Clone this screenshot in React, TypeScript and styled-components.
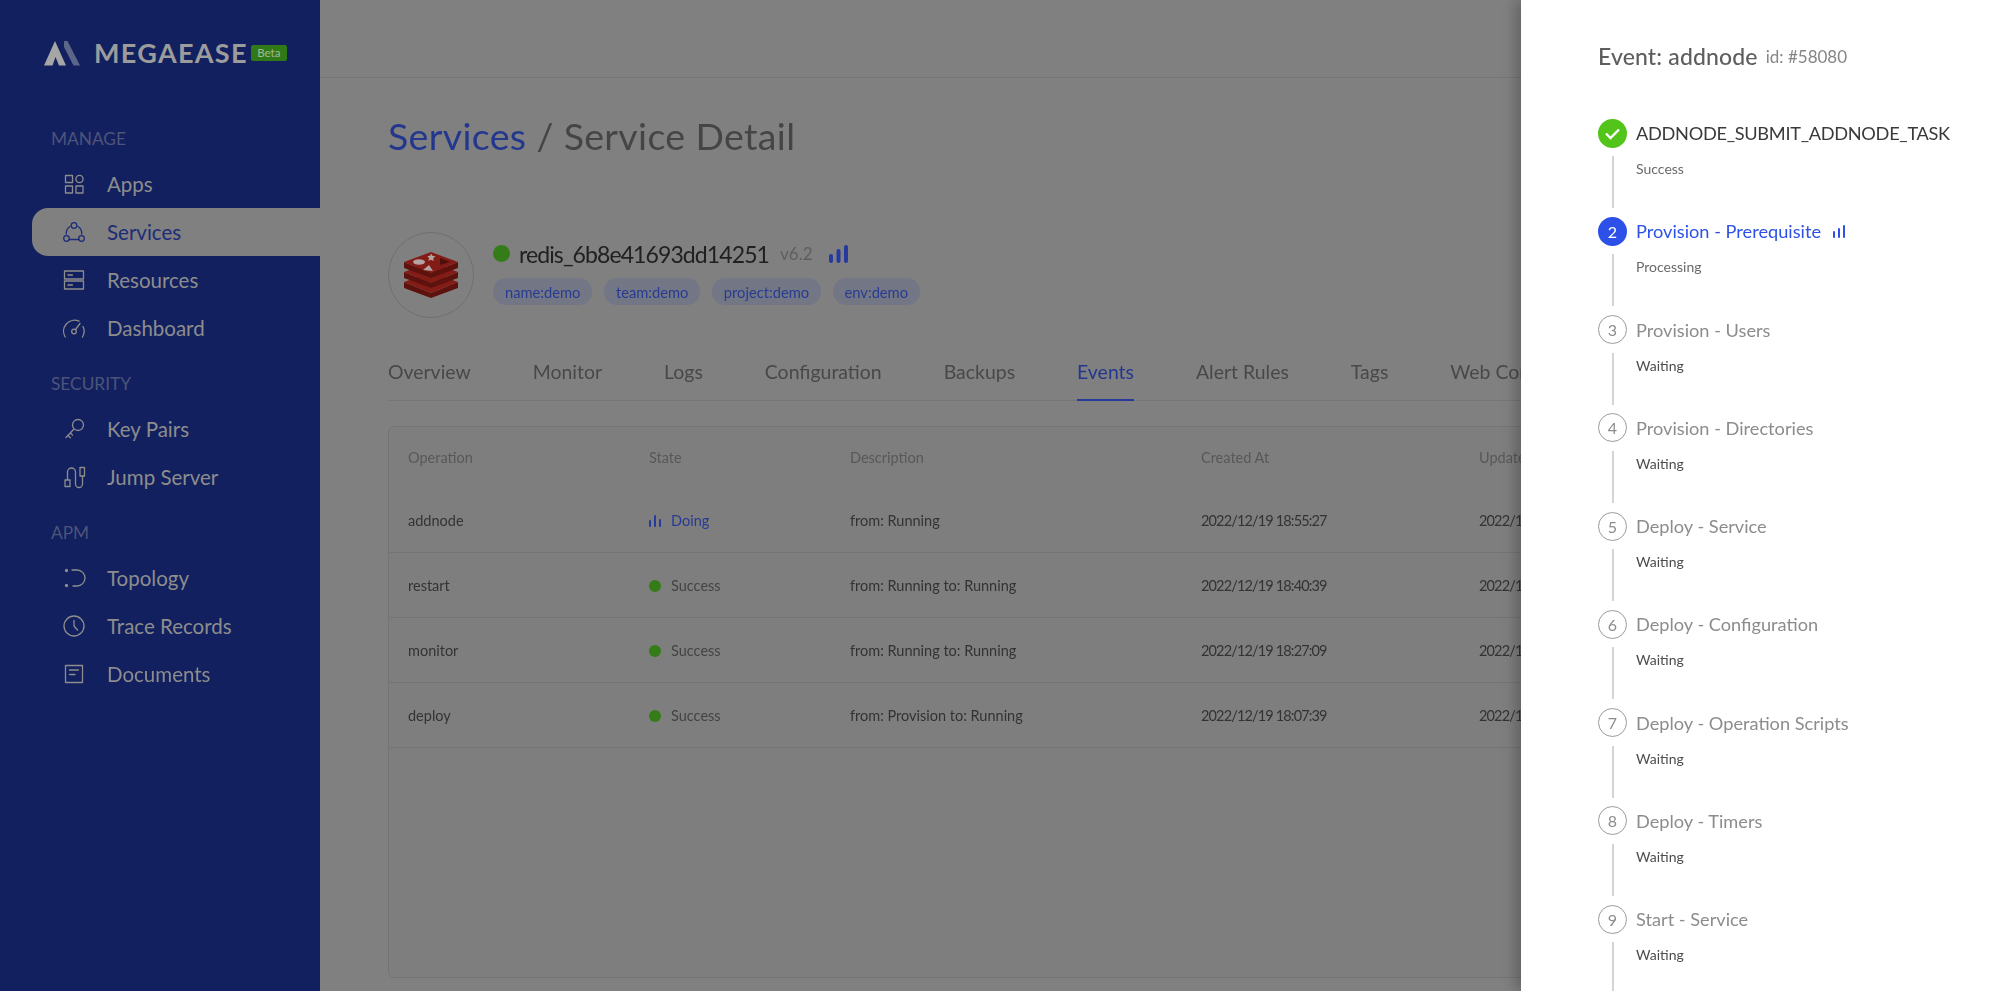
import React from "react";
import styled, { createGlobalStyle } from "styled-components";

const GlobalStyle = createGlobalStyle`
  html, body {
    margin: 0;
    padding: 0;
    height: 100%;
    overflow: hidden;
    background: #808080;
  }
  * {
    box-sizing: border-box;
  }
`;

const Page = styled.div`
  position: relative;
  width: 1999px;
  height: 991px;
  display: flex;
  overflow: hidden;
  font-family: "Lato", "Noto Sans", sans-serif;
  filter: blur(0.4px);
`;

const Sidebar = styled.aside`
  width: 320px;
  flex: none;
  background: #12205f;
  color: #8d8d8d;
`;

const LogoRow = styled.div`
  height: 124px;
  padding: 40px 0 0 44px;
  display: flex;
  align-items: flex-start;
`;

const LogoText = styled.span`
  margin-left: 14px;
  font-size: 27px;
  line-height: 26px;
  font-weight: 700;
  letter-spacing: 1.3px;
  color: #9c9c9c;
`;

const BetaBadge = styled.span`
  margin: 5px 0 0 3px;
  width: 36px;
  height: 16px;
  border-radius: 2px;
  background: #2f7a16;
  color: #a4b79c;
  font-size: 11.5px;
  line-height: 16px;
  text-align: center;
`;

const SectionLabel = styled.div<{ $first?: boolean }>`
  height: 36px;
  margin-top: ${(p) => (p.$first ? 0 : 17)}px;
  padding: 5px 0 0 51px;
  font-size: 17.3px;
  line-height: 20px;
  color: #4d5479;
`;

const NavItem = styled.div<{ $active?: boolean }>`
  height: 48px;
  margin-left: 32px;
  padding-left: 30px;
  display: flex;
  align-items: center;
  gap: 21px;
  font-size: 20.5px;
  border-radius: 16px 0 0 16px;
  background: ${(p) => (p.$active ? "#808080" : "transparent")};
  color: ${(p) => (p.$active ? "#1c2c78" : "#8d8d8d")};
  svg {
    flex: none;
    width: 24px;
    height: 24px;
  }
`;

const Main = styled.main`
  flex: 1;
  min-width: 0;
  overflow: hidden;
`;

const TopBar = styled.div`
  height: 78px;
  border-bottom: 1px solid #757575;
`;

const Content = styled.div`
  padding: 0 64px 0 68px;
`;

const Crumbs = styled.h1`
  margin: 35px 0 0;
  font-size: 37.5px;
  line-height: 46px;
  font-weight: 400;
  letter-spacing: 0.35px;
  color: #454545;
`;

const CrumbLink = styled.span`
  color: #24378f;
`;

const ServiceHead = styled.div`
  margin-top: 73px;
  height: 86px;
  display: flex;
  gap: 19px;
`;

const Avatar = styled.div`
  width: 86px;
  height: 86px;
  flex: none;
  border-radius: 50%;
  border: 1px solid #6f6f6f;
  display: flex;
  align-items: center;
  justify-content: center;
`;

const ServiceInfo = styled.div`
  display: flex;
  flex-direction: column;
`;

const NameRow = styled.div`
  height: 46px;
  padding-bottom: 3px;
  display: flex;
  align-items: center;
`;

const StatusDot = styled.span<{ $size: number }>`
  width: ${(p) => p.$size}px;
  height: ${(p) => p.$size}px;
  flex: none;
  border-radius: 50%;
  background: #337c17;
`;

const ServiceName = styled.span`
  margin-left: 9px;
  font-size: 23px;
  letter-spacing: -0.9px;
  color: #202020;
`;

const Version = styled.span`
  margin-left: 11px;
  font-size: 17px;
  color: #5e5e5e;
`;

const NameBars = styled.span`
  margin-left: 16px;
  display: flex;
`;

const TagRow = styled.div`
  display: flex;
  gap: 11.5px;
`;

const Tag = styled.span`
  height: 27px;
  padding: 0 12px;
  display: flex;
  align-items: center;
  border-radius: 13px;
  background: #737785;
  color: #283b92;
  font-size: 14.7px;
`;

const Tabs = styled.div`
  margin-top: 27px;
  height: 56px;
  display: flex;
  gap: 62px;
  border-bottom: 1px solid #767676;
  white-space: nowrap;
`;

const Tab = styled.div<{ $active?: boolean }>`
  height: 56px;
  padding-bottom: 2px;
  display: flex;
  align-items: center;
  font-size: 19.45px;
  color: ${(p) => (p.$active ? "#24378f" : "#484848")};
  border-bottom: 2px solid ${(p) => (p.$active ? "#273a9a" : "transparent")};
`;

const TableBox = styled.div`
  margin-top: 25px;
  height: 552px;
  border: 1px solid #747474;
  border-radius: 6px;
  background: #7e7e7e;
`;

const Row = styled.div<{ $head?: boolean }>`
  height: ${(p) => (p.$head ? 61 : 65)}px;
  padding: ${(p) => (p.$head ? "0" : "1px")} 0 0 19px;
  display: grid;
  grid-template-columns: 241px 201px 351px 278px 1fr;
  align-items: center;
  font-size: 14.5px;
  color: ${(p) => (p.$head ? "#585858" : "#333")};
  border-bottom: ${(p) => (p.$head ? "none" : "1px solid #747474")};
  white-space: nowrap;
`;

const DateCell = styled.div`
  letter-spacing: -0.85px;
`;

const StateCell = styled.div<{ $doing?: boolean }>`
  display: flex;
  align-items: center;
  gap: 10px;
  color: ${(p) => (p.$doing ? "#273a96" : "#444")};
`;

const StateMark = styled.span`
  width: 12px;
  display: flex;
  justify-content: center;
`;

const Drawer = styled.aside`
  position: absolute;
  top: 0;
  right: 0;
  bottom: 0;
  width: 478px;
  padding: 41px 0 0 77px;
  background: #fff;
  box-shadow: -6px 0 12px rgba(0, 0, 0, 0.22);
  overflow: hidden;
`;

const DrawerTitle = styled.div`
  height: 30px;
  display: flex;
  align-items: center;
  gap: 8px;
  font-size: 23px;
  font-weight: 500;
  letter-spacing: 0.15px;
  color: #5e5e5e;
`;

const EventId = styled.span`
  font-size: 17px;
  font-weight: 400;
  letter-spacing: 0;
  color: #858585;
`;

const Steps = styled.div`
  margin-top: 47.5px;
`;

const Step = styled.div`
  height: 98.25px;
  display: flex;
  gap: 9px;
`;

const StepRail = styled.div`
  width: 29px;
  flex: none;
  display: flex;
  flex-direction: column;
  align-items: center;
`;

const StepIcon = styled.div<{ $state: string }>`
  width: 29px;
  height: 29px;
  flex: none;
  border-radius: 50%;
  display: flex;
  align-items: center;
  justify-content: center;
  font-size: 16px;
  border: 1px solid ${(p) => (p.$state === "wait" ? "#9a9a9a" : "transparent")};
  background: ${(p) => (p.$state === "done" ? "#52c41a" : p.$state === "active" ? "#2d51e8" : "#fff")};
  color: ${(p) => (p.$state === "wait" ? "#8c8c8c" : "#fff")};
`;

const StepLine = styled.div`
  width: 2px;
  height: 52px;
  margin-top: 8.5px;
  background: #d4d4d4;
`;

const StepTitle = styled.div<{ $state: string }>`
  height: 29px;
  display: flex;
  align-items: center;
  gap: 12px;
  font-size: 18.2px;
  letter-spacing: ${(p) => (p.$state === "done" ? "-0.3px" : "0")};
  color: ${(p) => (p.$state === "done" ? "#3a3a3a" : p.$state === "active" ? "#2d51e8" : "#8c8c8c")};
`;

const StepDesc = styled.div<{ $state: string }>`
  margin-top: 11.5px;
  line-height: 20px;
  font-size: 14px;
  color: ${(p) => (p.$state === "wait" ? "#4c4c4c" : "#6a6a6a")};
`;

type IconProps = { d: string; extra?: React.ReactNode };

const LineIcon = ({ d, extra }: IconProps) => (
  <svg viewBox="0 0 24 24" fill="none" stroke="currentColor" strokeWidth="1.3" strokeLinecap="round" strokeLinejoin="round">
    <path d={d} />
    {extra}
  </svg>
);

const icons: Record<string, React.ReactNode> = {
  Apps: (
    <LineIcon
      d="M3.5 3.5h7v7h-7zM3.5 14h7v7h-7zM14 14h7v7h-7z"
      extra={<circle cx="17.5" cy="7" r="3.6" />}
    />
  ),
  Services: (
    <LineIcon
      d="M8 6.5A8.3 8.3 0 0 0 4.3 14M16 6.5A8.3 8.3 0 0 1 19.7 14M7 19.5h10"
      extra={
        <>
          <circle cx="12" cy="5.5" r="2.8" />
          <circle cx="4.5" cy="18.5" r="2.8" />
          <circle cx="19.5" cy="18.5" r="2.8" />
        </>
      }
    />
  ),
  Resources: <LineIcon d="M2.5 3h19v8h-19zM2.5 13h19v8h-19zM6 7h4.5M6 17h4.5" />,
  Dashboard: (
    <LineIcon
      d="M3.2 21A11 11 0 0 1 17 5.2M21 10.5a11 11 0 0 1-.5 10.5M13.5 13.5 18 7.5"
      extra={<circle cx="12" cy="15.5" r="2.3" />}
    />
  ),
  "Key Pairs": (
    <LineIcon
      d="M11.5 12.5 4 20.5M6 18.5l2.5 2.3M8.5 16l2 2"
      extra={<circle cx="16" cy="8" r="5.5" />}
    />
  ),
  "Jump Server": (
    <LineIcon d="M5.5 14V7a4 4 0 0 1 8 0v12a3.5 3.5 0 0 0 7 0v-7M3 15h5v6.5H3zM18 2.5h4.5V11H18z" />
  ),
  Topology: (
    <LineIcon
      d="M10 4h5a8 8 0 0 1 0 16h-4"
      extra={
        <>
          <circle cx="4.5" cy="4.5" r="1" fill="currentColor" />
          <circle cx="4.5" cy="19.5" r="1" fill="currentColor" />
        </>
      }
    />
  ),
  "Trace Records": <LineIcon d="M12 6.5V12l3.5 4" extra={<circle cx="12" cy="12" r="10" />} />,
  Documents: <LineIcon d="M3.5 3.5h17v17h-17zM7.5 8h9M7.5 12.5h5.5" />,
};

const Nav = ({ name, active }: { name: string; active?: boolean }) => (
  <NavItem $active={active}>
    {icons[name]}
    {name}
  </NavItem>
);

const Logo = () => (
  <svg width="36" height="26" viewBox="0 0 36 26">
    <path d="M11 1 22 25.5H15L11.5 17 8.5 25.5H0Z" fill="#a6a6a6" />
    <path d="M20 1h3.5L36 25.5h-6.5L20 7Z" fill="#5c6687" />
  </svg>
);

const RedisLayer = ({ y }: { y: number }) => (
  <g transform={`translate(0 ${y})`}>
    <path d="M0 10v6l27 10 27-10v-6L27 21Z" fill="#5e120e" />
    <path d="M0 10 27 0l27 10-27 11Z" fill="#831c17" />
  </g>
);

const RedisLogo = () => (
  <svg width="54" height="46" viewBox="0 0 54 46">
    <RedisLayer y={20} />
    <RedisLayer y={10} />
    <RedisLayer y={0} />
    <ellipse cx="15" cy="10" rx="6" ry="2.8" fill="#b3a3a1" />
    <path d="m27 1.5 1.300 2.300 3.200.5-2.300 1.900.5 2.800-2.700-1.300-2.800 1 1-2.700-2-1.800 2.900-.5Z" fill="#b3a3a1" />
    <path d="m19 18 6-5 4 6Z" fill="#b3a3a1" />
    <path d="m36 6 10 4-10 3Z" fill="#4d0f0a" />
  </svg>
);

const BarsIcon = ({ w, h, color, bars, bw }: { w: number; h: number; color: string; bars: number[]; bw: number }) => (
  <svg width={w} height={h} viewBox={`0 0 ${w} ${h}`}>
    {bars.map((b, i) => (
      <rect
        key={i}
        x={(i * (w - bw)) / (bars.length - 1)}
        y={h - b}
        width={bw}
        height={b}
        rx={bw / 2}
        fill={color}
      />
    ))}
  </svg>
);

const events = [
  { op: "addnode", doing: true, state: "Doing", desc: "from: Running", at: "2022/12/19 18:55:27" },
  { op: "restart", state: "Success", desc: "from: Running to: Running", at: "2022/12/19 18:40:39" },
  { op: "monitor", state: "Success", desc: "from: Running to: Running", at: "2022/12/19 18:27:09" },
  { op: "deploy", state: "Success", desc: "from: Provision to: Running", at: "2022/12/19 18:07:39" },
];

const steps = [
  { title: "ADDNODE_SUBMIT_ADDNODE_TASK", desc: "Success", state: "done" },
  { title: "Provision - Prerequisite", desc: "Processing", state: "active" },
  { title: "Provision - Users", desc: "Waiting", state: "wait" },
  { title: "Provision - Directories", desc: "Waiting", state: "wait" },
  { title: "Deploy - Service", desc: "Waiting", state: "wait" },
  { title: "Deploy - Configuration", desc: "Waiting", state: "wait" },
  { title: "Deploy - Operation Scripts", desc: "Waiting", state: "wait" },
  { title: "Deploy - Timers", desc: "Waiting", state: "wait" },
  { title: "Start - Service", desc: "Waiting", state: "wait" },
];

const tabs = ["Overview", "Monitor", "Logs", "Configuration", "Backups", "Events", "Alert Rules", "Tags", "Web Console"];

export default function App() {
  return (
    <Page>
      <GlobalStyle />
      <Sidebar>
        <LogoRow>
          <Logo />
          <LogoText>MEGAEASE</LogoText>
          <BetaBadge>Beta</BetaBadge>
        </LogoRow>
        <SectionLabel $first>MANAGE</SectionLabel>
        <Nav name="Apps" />
        <Nav name="Services" active />
        <Nav name="Resources" />
        <Nav name="Dashboard" />
        <SectionLabel>SECURITY</SectionLabel>
        <Nav name="Key Pairs" />
        <Nav name="Jump Server" />
        <SectionLabel>APM</SectionLabel>
        <Nav name="Topology" />
        <Nav name="Trace Records" />
        <Nav name="Documents" />
      </Sidebar>
      <Main>
        <TopBar />
        <Content>
          <Crumbs>
            <CrumbLink>Services</CrumbLink> / Service Detail
          </Crumbs>
          <ServiceHead>
            <Avatar>
              <RedisLogo />
            </Avatar>
            <ServiceInfo>
              <NameRow>
                <StatusDot $size={17} />
                <ServiceName>redis_6b8e41693dd14251</ServiceName>
                <Version>v6.2</Version>
                <NameBars>
                  <BarsIcon w={19} h={18} color="#26399c" bars={[9, 14, 18]} bw={4} />
                </NameBars>
              </NameRow>
              <TagRow>
                <Tag>name:demo</Tag>
                <Tag>team:demo</Tag>
                <Tag>project:demo</Tag>
                <Tag>env:demo</Tag>
              </TagRow>
            </ServiceInfo>
          </ServiceHead>
          <Tabs>
            {tabs.map((t) => (
              <Tab key={t} $active={t === "Events"}>
                {t}
              </Tab>
            ))}
          </Tabs>
          <TableBox>
            <Row $head>
              <div>Operation</div>
              <div>State</div>
              <div>Description</div>
              <div>Created At</div>
              <div>Updated At</div>
            </Row>
            {events.map((e) => (
              <Row key={e.op}>
                <div>{e.op}</div>
                <StateCell $doing={e.doing}>
                  <StateMark>
                    {e.doing ? (
                      <BarsIcon w={12} h={12} color="#26399c" bars={[7, 12, 8]} bw={2} />
                    ) : (
                      <StatusDot $size={12} />
                    )}
                  </StateMark>
                  {e.state}
                </StateCell>
                <div>{e.desc}</div>
                <DateCell>{e.at}</DateCell>
                <DateCell>{e.at}</DateCell>
              </Row>
            ))}
          </TableBox>
        </Content>
      </Main>
      <Drawer>
        <DrawerTitle>
          Event: addnode
          <EventId>id: #58080</EventId>
        </DrawerTitle>
        <Steps>
          {steps.map((s, i) => (
            <Step key={s.title}>
              <StepRail>
                <StepIcon $state={s.state}>
                  {s.state === "done" ? (
                    <svg width="17" height="17" viewBox="0 0 17 17" fill="none" stroke="#fff" strokeWidth="2.4">
                      <path d="m2 8.5 4.500 4.500L15 4.500" />
                    </svg>
                  ) : (
                    i + 1
                  )}
                </StepIcon>
                <StepLine />
              </StepRail>
              <div>
                <StepTitle $state={s.state}>
                  {s.title}
                  {s.state === "active" && <BarsIcon w={12} h={13} color="#2d51e8" bars={[7, 10, 13]} bw={2} />}
                </StepTitle>
                <StepDesc $state={s.state}>{s.desc}</StepDesc>
              </div>
            </Step>
          ))}
        </Steps>
      </Drawer>
    </Page>
  );
}
